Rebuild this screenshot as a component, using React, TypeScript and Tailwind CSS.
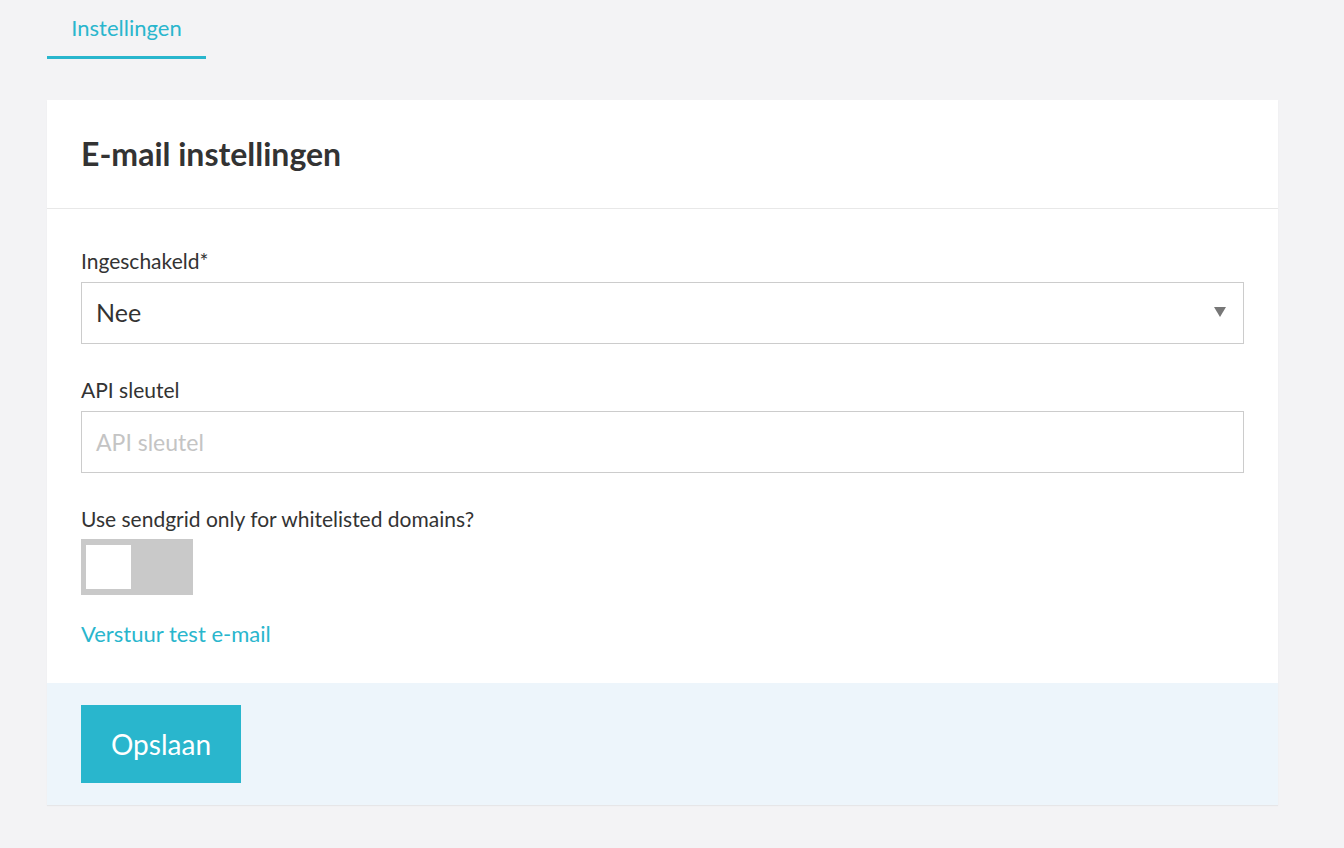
export default function App() {
  return (
    <div className="min-h-[848px] w-full bg-[#f3f3f5] pl-[47px] pr-[66px] pt-[12px] text-[#333]" style={{ fontFamily: 'Lato, "Open Sans", sans-serif' }}>
      <div className="flex">
        <div className="w-[159px] border-b-[3px] border-[#29b6cd] pb-[12px] text-center text-[22px] leading-[32px] text-[#29b6cd]">Instellingen</div>
      </div>
      <div className="mt-[41px] bg-white shadow-[0_1px_1px_rgba(0,0,0,0.05)]">
        <div className="flex h-[109px] items-center border-b border-[#e8e8e8] px-[34px]">
          <h1 className="text-[32px] font-bold text-[#333]">E-mail instellingen</h1>
        </div>
        <div className="px-[34px] pt-[38px] pb-[34px]">
          <div className="text-[21px] leading-[28px]">Ingeschakeld*</div>
          <div className="relative mt-[7px] flex h-[62px] items-center border border-[#ccc] px-[14px] text-[25px]">
            Nee
            <span className="absolute right-[17px] top-[24px] h-0 w-0 border-x-[6px] border-t-[10px] border-x-transparent border-t-[#777]" />
          </div>
          <div className="mt-[32px] text-[21px] leading-[28px]">API sleutel</div>
          <div className="mt-[7px] flex h-[62px] items-center border border-[#ccc] px-[14px] text-[23px] text-[#c4c4c4]">API sleutel</div>
          <div className="mt-[32px] text-[21px] leading-[28px]">Use sendgrid only for whitelisted domains?</div>
          <div className="mt-[6px] flex h-[56px] w-[112px] items-center bg-[#c9c9c9] px-[5px]">
            <div className="h-[44px] w-[45px] bg-white" />
          </div>
          <div className="mt-[24px] text-[22px] leading-[30px] text-[#29b6cd]">Verstuur test e-mail</div>
        </div>
        <div className="bg-[#edf5fb] px-[34px] py-[22px]">
          <button className="h-[78px] w-[160px] bg-[#29b6cd] text-[28px] text-white">Opslaan</button>
        </div>
      </div>
    </div>
  );
}
